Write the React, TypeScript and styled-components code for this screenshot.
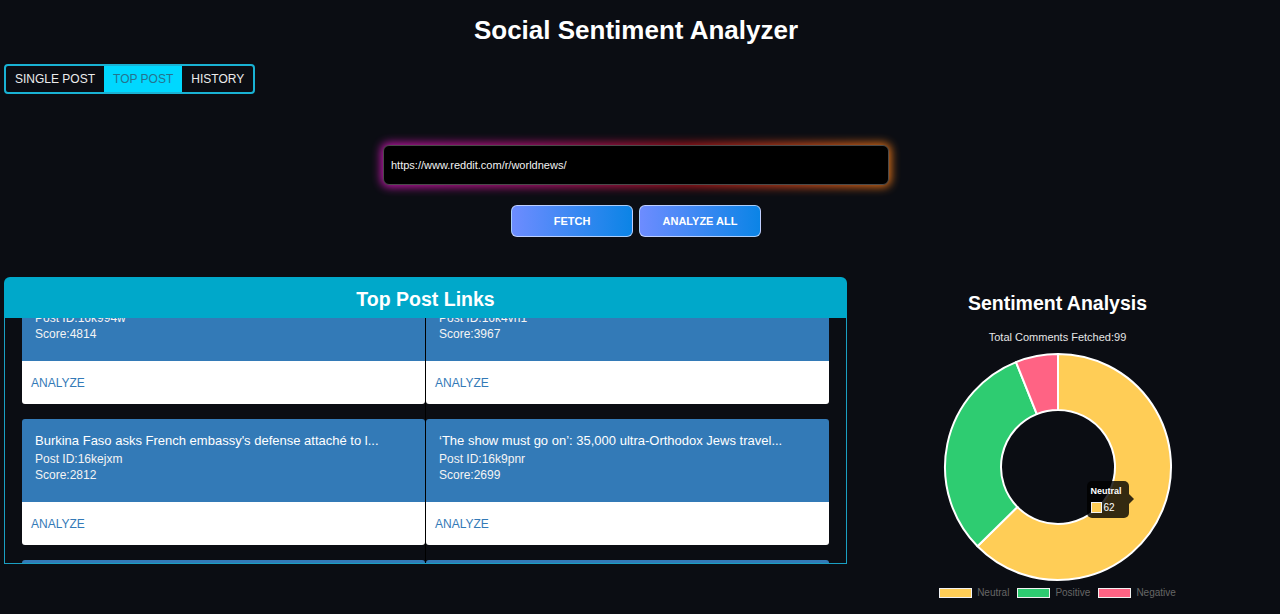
import React from "react";
import styled, { createGlobalStyle } from "styled-components";

const GlobalStyle = createGlobalStyle`
  html, body {
    margin: 0;
    padding: 0;
    background: #0b0d13;
    font-family: "Liberation Sans", Arial, sans-serif;
    color: #fff;
    overflow: hidden;
  }
  * { box-sizing: border-box; }
`;

const Page = styled.div`
  padding: 0 12px 0 4px;
  height: 614px;
  display: flex;
  flex-direction: column;
`;

const Title = styled.h1`
  margin: 15px 0 0;
  font-size: 26px;
  line-height: 30px;
  font-weight: 700;
  text-align: center;
  color: #fff;
`;

const TabBar = styled.div`
  margin-top: 19px;
  align-self: flex-start;
  display: inline-flex;
  border: 2px solid #19b2d4;
  border-radius: 4px;
  overflow: hidden;
`;

const Tab = styled.button<{ $active?: boolean }>`
  height: 26px;
  padding: 0 9px;
  border: none;
  margin: 0;
  font-family: inherit;
  font-size: 12px;
  background: ${(p) => (p.$active ? "#00d8ff" : "transparent")};
  color: ${(p) => (p.$active ? "#24738f" : "#ececec")};
  cursor: pointer;
`;

const InputWrap = styled.div`
  position: relative;
  align-self: center;
  width: 506px;
  height: 40px;
  margin-top: 51px;
  &::before {
    content: "";
    position: absolute;
    inset: -2px;
    border-radius: 8px;
    background: linear-gradient(90deg, #d018b8 0%, #c0127a 30%, #b8141c 60%, #f07a18 100%);
    filter: blur(5px);
    opacity: 0.95;
  }
`;

const UrlInput = styled.input`
  position: relative;
  width: 100%;
  height: 100%;
  background: #000;
  border: 1px solid #4a4a4a;
  border-radius: 6px;
  padding: 0 7px;
  color: #f2f2f2;
  font-family: inherit;
  font-size: 11px;
  outline: none;
`;

const ButtonRow = styled.div`
  margin-top: 20px;
  display: flex;
  justify-content: center;
  gap: 6px;
`;

const ActionButton = styled.button`
  width: 122px;
  height: 32px;
  border-radius: 6px;
  border: 1px solid rgba(220, 230, 255, 0.75);
  background: linear-gradient(90deg, #6d8cff 0%, #0b84e6 100%);
  color: #fff;
  font-family: inherit;
  font-weight: 700;
  font-size: 11px;
  cursor: pointer;
`;

const ContentRow = styled.div`
  margin-top: 40px;
  display: flex;
  align-items: flex-start;
`;

const Panel = styled.section`
  width: 843px;
  flex: none;
  display: flex;
  flex-direction: column;
`;

const PanelHeader = styled.div`
  height: 41px;
  background: #00a8ca;
  border-radius: 6px 6px 0 0;
  display: flex;
  align-items: center;
  justify-content: center;
  padding-top: 3px;
`;

const PanelTitle = styled.h2`
  margin: 0;
  font-size: 19.5px;
  font-weight: 700;
  color: #fff;
`;

const PanelBody = styled.div`
  height: 246px;
  border: 1px solid #1a9fc2;
  border-top: none;
  overflow: hidden;
  padding: 0 17px;
`;

const CardGrid = styled.div`
  margin-top: -40px;
  display: grid;
  grid-template-columns: 403px 403px;
  column-gap: 1px;
  row-gap: 15px;
  background: linear-gradient(#000, #000) 403px 0 / 1px 100% no-repeat;
`;

const Card = styled.article`
  display: flex;
  flex-direction: column;
  border-radius: 3px;
  overflow: hidden;
`;

const CardBody = styled.div`
  background: #337ab7;
  height: 83px;
  padding: 14px 13px 0;
  color: #fff;
`;

const CardTitle = styled.div`
  font-size: 13px;
  line-height: 16px;
  white-space: nowrap;
  overflow: hidden;
`;

const CardMeta = styled.div<{ $first?: boolean }>`
  font-size: 12px;
  line-height: 16px;
  margin-top: ${(p) => (p.$first ? "2px" : "0")};
  color: #f4f4f4;
`;

const CardFooter = styled.div`
  background: #fff;
  height: 43px;
  padding: 0 9px;
  display: flex;
  align-items: center;
`;

const AnalyzeLink = styled.a`
  color: #337ab7;
  font-size: 12px;
  text-decoration: none;
  cursor: pointer;
`;

const SidePanel = styled.aside`
  flex: 1;
  padding-top: 14px;
  display: flex;
  flex-direction: column;
  align-items: center;
`;

const SideTitle = styled.h3`
  margin: 0;
  font-size: 19.5px;
  line-height: 24px;
  font-weight: 700;
  color: #fff;
`;

const SideSub = styled.div`
  margin-top: 15px;
  font-size: 11px;
  line-height: 14px;
  color: #e6e6e6;
`;

const ChartBox = styled.div`
  margin-top: 8px;
  position: relative;
  width: 230px;
  height: 230px;
`;

const Tooltip = styled.div`
  position: absolute;
  left: 144px;
  top: 129px;
  width: 42px;
  height: 37px;
  padding: 4px 4px 0;
  background: rgba(0, 0, 0, 0.8);
  border-radius: 5px;
  &::after {
    content: "";
    position: absolute;
    right: -5px;
    top: 13px;
    border-top: 5px solid transparent;
    border-bottom: 5px solid transparent;
    border-left: 5px solid rgba(0, 0, 0, 0.8);
  }
`;

const TipTitle = styled.div`
  font-size: 9px;
  line-height: 12px;
  font-weight: 700;
  color: #fff;
`;

const TipLine = styled.div`
  margin-top: 5px;
  display: flex;
  align-items: center;
  gap: 2px;
  font-size: 10px;
  line-height: 11px;
  color: #fff;
`;

const Swatch = styled.span<{ $color: string; $w: number; $h: number }>`
  display: inline-block;
  width: ${(p) => p.$w}px;
  height: ${(p) => p.$h}px;
  background: ${(p) => p.$color};
  border: 1px solid #f2f2f2;
`;

const Legend = styled.div`
  margin-top: 6px;
  display: flex;
  align-items: center;
  gap: 8px;
`;

const LegendItem = styled.div`
  display: flex;
  align-items: center;
  gap: 5px;
  font-size: 10px;
  line-height: 10px;
  color: #666;
`;

type Post = { title: string; id: string; score: number };

const posts: Post[] = [
  { title: "Ukraine says it has recaptured village on southern front line...", id: "16k994w", score: 4814 },
  { title: "UN warns of humanitarian crisis as thousands flee fighting...", id: "16k4vh1", score: 3967 },
  { title: "Burkina Faso asks French embassy's defense attaché to l...", id: "16kejxm", score: 2812 },
  { title: "‘The show must go on’: 35,000 ultra-Orthodox Jews travel...", id: "16k9pnr", score: 2699 },
  { title: "Morocco earthquake death toll rises as rescuers search rubble...", id: "16k7abq", score: 2410 },
  { title: "Libya floods: thousands feared dead after dams burst in Derna...", id: "16kb2tz", score: 2288 },
];

const CX = 115;
const CY = 115;
const R_OUT = 113;
const R_IN = 57;

function arcPath(a0: number, a1: number) {
  const pt = (a: number, r: number) => [CX + r * Math.sin(a), CY - r * Math.cos(a)];
  const large = a1 - a0 > Math.PI ? 1 : 0;
  const [x0, y0] = pt(a0, R_OUT);
  const [x1, y1] = pt(a1, R_OUT);
  const [x2, y2] = pt(a1, R_IN);
  const [x3, y3] = pt(a0, R_IN);
  return `M${x0} ${y0} A${R_OUT} ${R_OUT} 0 ${large} 1 ${x1} ${y1} L${x2} ${y2} A${R_IN} ${R_IN} 0 ${large} 0 ${x3} ${y3} Z`;
}

const data = [
  { label: "Neutral", value: 62, color: "#ffcd56" },
  { label: "Positive", value: 31, color: "#2ecc71" },
  { label: "Negative", value: 6, color: "#ff6384" },
];

function Donut() {
  const total = data.reduce((s, d) => s + d.value, 0);
  let acc = 0;
  return (
    <svg width={230} height={230} viewBox="0 0 230 230">
      {data.map((d) => {
        const a0 = (acc / total) * Math.PI * 2;
        acc += d.value;
        const a1 = (acc / total) * Math.PI * 2;
        return (
          <path key={d.label} d={arcPath(a0, a1)} fill={d.color} stroke="#fff" strokeWidth={2} strokeLinejoin="round" />
        );
      })}
    </svg>
  );
}

export default function App() {
  return (
    <>
      <GlobalStyle />
      <Page>
        <Title>Social Sentiment Analyzer</Title>
        <TabBar>
          <Tab>SINGLE POST</Tab>
          <Tab $active>TOP POST</Tab>
          <Tab>HISTORY</Tab>
        </TabBar>
        <InputWrap>
          <UrlInput defaultValue="https://www.reddit.com/r/worldnews/" />
        </InputWrap>
        <ButtonRow>
          <ActionButton>FETCH</ActionButton>
          <ActionButton>ANALYZE ALL</ActionButton>
        </ButtonRow>
        <ContentRow>
          <Panel>
            <PanelHeader>
              <PanelTitle>Top Post Links</PanelTitle>
            </PanelHeader>
            <PanelBody>
              <CardGrid>
                {posts.map((p) => (
                  <Card key={p.id}>
                    <CardBody>
                      <CardTitle>{p.title}</CardTitle>
                      <CardMeta $first>Post ID:{p.id}</CardMeta>
                      <CardMeta>Score:{p.score}</CardMeta>
                    </CardBody>
                    <CardFooter>
                      <AnalyzeLink>ANALYZE</AnalyzeLink>
                    </CardFooter>
                  </Card>
                ))}
              </CardGrid>
            </PanelBody>
          </Panel>
          <SidePanel>
            <SideTitle>Sentiment Analysis</SideTitle>
            <SideSub>Total Comments Fetched:99</SideSub>
            <ChartBox>
              <Donut />
              <Tooltip>
                <TipTitle>Neutral</TipTitle>
                <TipLine>
                  <Swatch $color="#ffcd56" $w={11} $h={11} />
                  62
                </TipLine>
              </Tooltip>
            </ChartBox>
            <Legend>
              {data.map((d) => (
                <LegendItem key={d.label}>
                  <Swatch $color={d.color} $w={33} $h={10} />
                  {d.label}
                </LegendItem>
              ))}
            </Legend>
          </SidePanel>
        </ContentRow>
      </Page>
    </>
  );
}
